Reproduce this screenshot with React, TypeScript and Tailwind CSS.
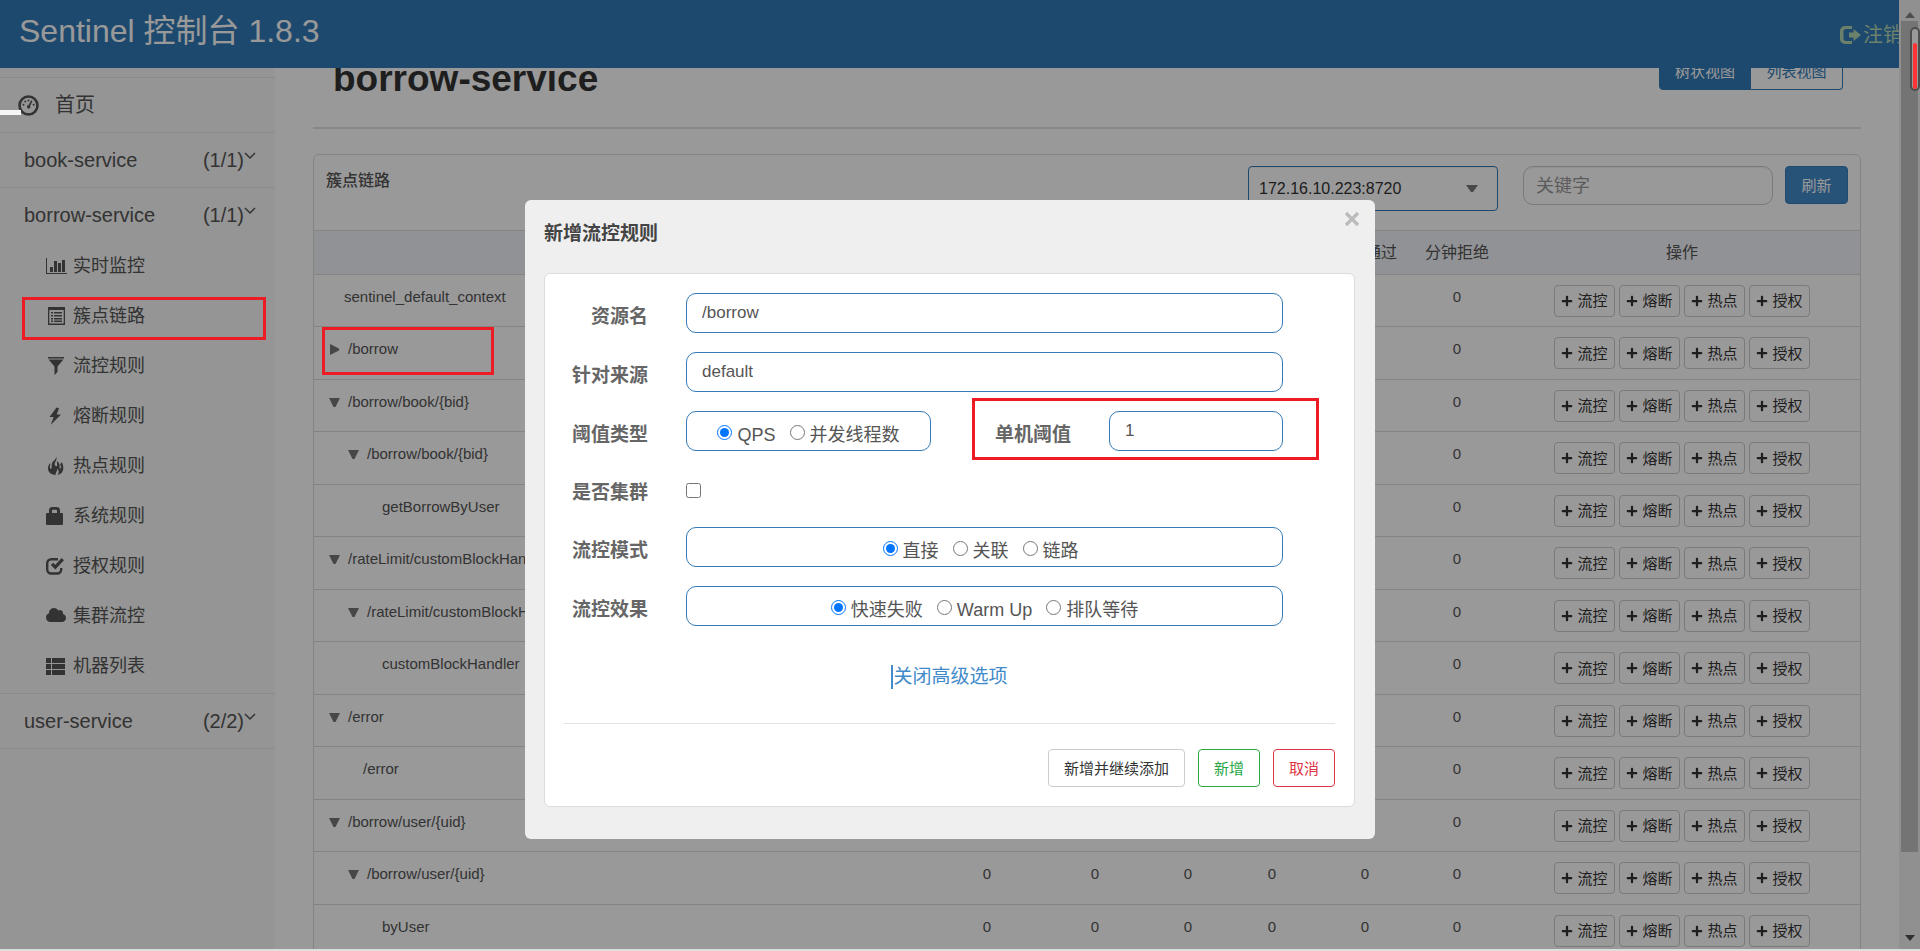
import type { ReactNode } from 'react';
import { FaCloud, FaPlus } from 'react-icons/fa';

const FONT = "font-['Liberation_Sans','Noto_Sans_CJK_SC',sans-serif]";

const MENU = [
  { label: '实时监控', icon: <ChartIcon /> },
  { label: '簇点链路', icon: <ListAltIcon />, marked: true },
  { label: '流控规则', icon: <FilterIcon /> },
  { label: '熔断规则', icon: <FlashIcon /> },
  { label: '热点规则', icon: <FireIcon /> },
  { label: '系统规则', icon: <LockIcon /> },
  { label: '授权规则', icon: <CheckIcon /> },
  { label: '集群流控', icon: <FaCloud className="mb-0.5 size-5" /> },
  { label: '机器列表', icon: <ThListIcon /> },
];

type Node = { name: string; level: number; state?: 'open' | 'closed'; marked?: boolean };

const NODES: Node[] = [
  { name: 'sentinel_default_context', level: 0 },
  { name: '/borrow', level: 0, state: 'closed', marked: true },
  { name: '/borrow/book/{bid}', level: 0, state: 'open' },
  { name: '/borrow/book/{bid}', level: 1, state: 'open' },
  { name: 'getBorrowByUser', level: 2 },
  { name: '/rateLimit/customBlockHandler', level: 0, state: 'open' },
  { name: '/rateLimit/customBlockHandler', level: 1, state: 'open' },
  { name: 'customBlockHandler', level: 2 },
  { name: '/error', level: 0, state: 'open' },
  { name: '/error', level: 1 },
  { name: '/borrow/user/{uid}', level: 0, state: 'open' },
  { name: '/borrow/user/{uid}', level: 1, state: 'open' },
  { name: 'byUser', level: 2 },
];

const COLUMNS = [
  { label: '通过QPS', width: 'w-[102px]' },
  { label: '拒绝QPS', width: 'w-[114px]' },
  { label: '并发数', width: 'w-[72px]' },
  { label: '平均RT', width: 'w-24' },
  { label: '分钟通过', width: 'w-[90px]' },
  { label: '分钟拒绝', width: 'w-[94px]' },
];

const INDENT = ['pl-[15px]', 'pl-[34px]', 'pl-[53px]'];
const ACTIONS = ['流控', '熔断', '热点', '授权'];

function DashboardIcon() {
  return (
    <svg viewBox="0 0 21 21" className="size-[21px]" fill="currentColor">
      <circle cx="10.5" cy="10.5" r="9" fill="none" stroke="currentColor" strokeWidth="2.6" />
      <circle cx="5.5" cy="9.8" r="1" />
      <circle cx="7.3" cy="6.6" r="1" />
      <circle cx="10.5" cy="5.4" r="1" />
      <circle cx="15.6" cy="9.8" r="1" />
      <path d="M13.2 5.3l1.3.6-2.4 5a1.7 1.7 0 1 1-1.5-.8z" />
    </svg>
  );
}

function ChartIcon() {
  return (
    <svg viewBox="0 0 21 16" className="h-4 w-[21px]" fill="currentColor">
      <path d="M0 0h1v15h20v1H0z" />
      <path d="M4 9h3v5H4zM8 3h3v11H8zM12 5h3v9h-3zM16 2h3v12h-3z" />
    </svg>
  );
}

function ListAltIcon() {
  return (
    <svg viewBox="0 0 17 18" className="ml-0.5 h-[18px] w-[17px]" fill="currentColor">
      <path fillRule="evenodd" d="M0 0h17v18H0zM1.3 3v13.6h14.4V3z" />
      <path d="M3 5h2v1.6H3zM6 5h8v1.6H6zM3 8h2v1.6H3zM6 8h8v1.6H6zM3 11h2v1.6H3zM6 11h8v1.6H6zM3 13.600h2v1.4H3zM6 13.600h8v1.4H6z" />
    </svg>
  );
}

function FilterIcon() {
  return (
    <svg viewBox="0 0 16 18" className="ml-0.5 h-[18px] w-4" fill="currentColor">
      <path d="M0 0h16v1.6H0zM.6 2.6h14.8L9.500 9.5V15l-3 3V9.5z" />
    </svg>
  );
}

function FlashIcon() {
  return (
    <svg viewBox="0 0 18 18" className="size-[18px]" fill="currentColor">
      <path d="M10.500 0.500L3.500 10h4.200L4.800 17.800 15 7.500h-4.300L13 1.200z" />
    </svg>
  );
}

function FireIcon() {
  return (
    <svg viewBox="0 0 18 18" className="ml-0.5 size-[18px]" fill="currentColor">
      <path d="M8.300 0C9 2.200 8.300 3.400 7.300 5 6.200 6.800 6.600 8.300 7.600 9c.9.500 1.600-.2 1.600-1.100C9.200 6.500 8.600 5.800 9.300 4c2.300 2.200 2.600 4.400 2.300 6.200-.2 1.200.4 1.700 1 1.100.7-.7.500-2.300-.5-3.800.4-.9.900-1.600 1.600-2.200 1.100 1.800 1.700 3.600 1.600 6-.1 3.500-2.300 6-5.600 6.600 1.600-2.300 1.300-4.500-.2-6.500.1 2.600-1.900 3.200-1.900 6.600C3 17.600 0 15.200 0 11.300c0-2 .8-3.700 2.200-5.200.5 1.700-.5 3-.3 4.500.1 1.200 1 1.500 1.500.8C4.200 10.200 3 8.200 4.300 5.600 5.300 3.700 7.700 3 8.300 0z" />
    </svg>
  );
}

function LockIcon() {
  return (
    <svg viewBox="0 0 17 18" className="h-[18px] w-[17px]" fill="currentColor">
      <path fillRule="evenodd" d="M3 6V3.5A3.500 3.500 0 0 1 6.500 0h4A3.500 3.500 0 0 1 14 3.500V6h2a1 1 0 0 1 1 1v10a1 1 0 0 1-1 1H1a1 1 0 0 1-1-1V7a1 1 0 0 1 1-1zM6 6h5V3.800a1 1 0 0 0-1-1H7a1 1 0 0 0-1 1z" />
    </svg>
  );
}

function CheckIcon() {
  return (
    <svg viewBox="0 0 18 18" className="size-[18px]" fill="none" stroke="currentColor">
      <path d="M12 2.200H5.200a4 4 0 0 0-4 4v6.300a4 4 0 0 0 4 4h6a4 4 0 0 0 4-4V11" strokeWidth="2.4" />
      <path d="M6 6.800l3.300 3.300L16.800 2.200" strokeWidth="3.2" />
    </svg>
  );
}

function ThListIcon() {
  return (
    <svg viewBox="0 0 19 17" className="h-[17px] w-[19px]" fill="currentColor">
      <path d="M0 0h5v5H0zM6 0h13v5H6zM0 6h5v5H0zM6 6h13v5H6zM0 12h5v5H0zM6 12h13v5H6z" />
    </svg>
  );
}

function LogoutIcon() {
  return (
    <svg viewBox="0 0 21 18" className="h-[18px] w-[21px]" fill="currentColor">
      <path d="M12 0v3H6a2.500 2.500 0 0 0-2.500 2.500v7A2.500 2.500 0 0 0 6 15h6v3H5a5 5 0 0 1-5-5V5a5 5 0 0 1 5-5z" />
      <path d="M13.500 3L21 9l-7.500 6v-3.500H9v-5h4.500z" />
    </svg>
  );
}

function Chevron() {
  return (
    <svg viewBox="0 0 12 8" className="mb-2 h-2 w-3" fill="none" stroke="currentColor" strokeWidth="1.5">
      <path d="M1 1l5 5 5-5" />
    </svg>
  );
}

function Caret({ state }: { state: 'open' | 'closed' }) {
  return (
    <svg viewBox="0 0 11 11" className="mt-1.5 mr-2 size-[11px] text-[#777]" fill="currentColor">
      <path d={state === 'open' ? 'M0 1h11L6.500 10h-2z' : 'M1 0v11l9-4.500v-2z'} />
    </svg>
  );
}

function ServiceRow({ name, count, expanded }: { name: string; count: string; expanded?: boolean }) {
  return (
    <a
      href="#"
      className={`flex items-center justify-between pr-[19px] pl-6 text-xl ${
        expanded ? 'h-[53px]' : 'h-[55px] border-b border-[#e7e7e7]'
      }`}
    >
      <span>{name}</span>
      <span className="flex items-center">
        {count}
        <Chevron />
      </span>
    </a>
  );
}

function Sidebar() {
  return (
    <nav className="w-[275px] shrink-0 bg-[#f8f8f8] pt-[9px] text-[#555]">
      <a href="#" className="flex h-14 items-center border-y border-[#e7e7e7] pl-[18px] text-xl">
        <DashboardIcon />
        <span className="ml-4">首页</span>
      </a>
      <ServiceRow name="book-service" count="(1/1)" />
      <ServiceRow name="borrow-service" count="(1/1)" expanded />
      <ul className="border-b border-[#e7e7e7] pb-0.5">
        {MENU.map((item) => (
          <li key={item.label} className="relative">
            <a href="#" className="flex h-[50px] items-center gap-1.5 pl-[46px] text-lg">
              <span className="flex w-[21px]">{item.icon}</span>
              {item.label}
            </a>
            {item.marked && (
              <span className="pointer-events-none absolute top-1.5 right-[9px] bottom-px left-[22px] z-20 border-3 border-[#ed1c24]" />
            )}
          </li>
        ))}
      </ul>
      <ServiceRow name="user-service" count="(2/2)" />
    </nav>
  );
}

function NodeTable() {
  return (
    <table className="w-full table-fixed border-collapse text-[15px] text-[#555]">
      <thead>
        <tr className="h-11 border-y border-[#ddd] bg-[#f2f4f8] text-base">
          <th className="font-normal">资源名</th>
          {COLUMNS.map((column) => (
            <th key={column.label} className={`${column.width} font-normal`}>
              {column.label}
            </th>
          ))}
          <th className="w-[356px] font-normal">操作</th>
        </tr>
      </thead>
      <tbody>
        {NODES.map((node, idx) => (
          <tr key={idx} className="h-[52px] border-b border-[#ddd] even:h-[53px]">
            <td className={`relative pt-[11px] align-top ${INDENT[node.level]}`}>
              <span className={`flex ${node.state ? '' : 'pl-[15px]'}`}>
                {node.state && <Caret state={node.state} />}
                {node.name}
              </span>
              {node.marked && (
                <span className="pointer-events-none absolute top-0 left-2 z-20 h-12 w-[172px] border-3 border-[#ed1c24]" />
              )}
            </td>
            {COLUMNS.map((column) => (
              <td key={column.label} className="pt-[11px] text-center align-top">
                0
              </td>
            ))}
            <td>
              <div className="flex justify-center gap-1">
                {ACTIONS.map((action) => (
                  <button
                    key={action}
                    type="button"
                    className="flex h-8 w-[61px] items-center justify-center gap-1 rounded border border-[#ccc] bg-white pt-0.5 text-[15px] text-[#333]"
                  >
                    <FaPlus className="mb-0.5 size-3" />
                    {action}
                  </button>
                ))}
              </div>
            </td>
          </tr>
        ))}
      </tbody>
    </table>
  );
}

function Main() {
  return (
    <main className="min-w-0 flex-1 bg-white px-[38px]">
      <div className="-mt-3.5 flex items-start justify-between pr-[18px] pl-5">
        <h1 className="text-[37px] leading-[50px] font-bold text-[#333]">borrow-service</h1>
        <div className="flex text-[15px]">
          <button type="button" className="h-9 w-[92px] rounded-l border border-[#337ab7] bg-[#337ab7] text-white">
            树状视图
          </button>
          <button
            type="button"
            className="h-9 w-[92px] rounded-r border border-l-0 border-[#337ab7] bg-white text-[#337ab7]"
          >
            列表视图
          </button>
        </div>
      </div>
      <hr className="mt-[23px] border-t-2 border-[#e3e3e3]" />
      <section className="mt-[25px] rounded-t-md border border-[#ddd]">
        <div className="flex h-[75px] items-start px-3 pt-[11px]">
          <h2 className="flex-1 text-base leading-[30px] font-medium text-[#555]">簇点链路</h2>
          <div className="relative mr-[25px]">
            <select
              aria-label="机器"
              className="h-[45px] w-[250px] appearance-none rounded border border-[#337ab7] bg-white px-2.5 text-base text-[#333] inset-shadow-xs"
            >
              <option>172.16.10.223:8720</option>
            </select>
            <svg viewBox="0 0 12 8" className="absolute top-[19px] right-5 h-2 w-3 text-[#777]" fill="currentColor">
              <path d="M0 0h12L7 7H5z" />
            </svg>
          </div>
          <input
            aria-label="关键字"
            placeholder="关键字"
            className="mr-3 h-[39px] w-[250px] rounded-[10px] border border-[#ccc] bg-white px-3 pt-0.5 text-lg inset-shadow-xs placeholder:text-[#999]"
          />
          <button type="button" className="h-[38px] w-[63px] rounded border border-[#357ebd] bg-[#428bca] pt-0.5 text-[15px] text-white">
            刷新
          </button>
        </div>
        <NodeTable />
      </section>
    </main>
  );
}

function Field({ label, htmlFor, children }: { label: string; htmlFor?: string; children: ReactNode }) {
  return (
    <div className="flex items-center">
      <label htmlFor={htmlFor} className="mr-[38px] w-[84px] pt-2 text-right text-[19px] leading-6 font-bold text-[#666]">
        {label}
      </label>
      {children}
    </div>
  );
}

function RadioGroup({ name, options, className }: { name: string; options: string[]; className: string }) {
  return (
    <div className={`flex h-10 items-center justify-center gap-3.5 rounded-[10px] border border-[#337ab7] ${className}`}>
      {options.map((option, idx) => (
        <label key={option} className="flex items-center gap-[5px] pt-2 text-lg leading-6 text-[#555]">
          <input type="radio" name={name} defaultChecked={idx === 0} className="mb-1.5 size-[15px] accent-[#0075ff]" />
          {option}
        </label>
      ))}
    </div>
  );
}

const INPUT = 'h-10 rounded-[10px] border border-[#337ab7] bg-white px-[15px] text-[17px] text-[#555]';

function FlowRuleDialog() {
  return (
    <div
      role="dialog"
      aria-label="新增流控规则"
      className="relative z-20 w-[850px] rounded-md bg-[#efefef] pt-4 pr-5 pb-8 pl-[19px]"
    >
      <button type="button" aria-label="关闭" className="absolute top-[11px] right-[15px] text-[#bbb]">
        <svg viewBox="0 0 16 16" className="size-4" stroke="currentColor" strokeWidth="3.2">
          <path d="M2 2l12 12M14 2L2 14" />
        </svg>
      </button>
      <h2 className="mb-[21px] text-[19px] leading-9 font-bold text-[#444]">新增流控规则</h2>
      <form className="rounded-md border border-[#dcdcdc] bg-white p-[19px]">
        <div className="flex flex-col gap-[19px]">
          <Field label="资源名" htmlFor="resource">
            <input id="resource" defaultValue="/borrow" className={`${INPUT} w-[597px]`} />
          </Field>
          <Field label="针对来源" htmlFor="origin">
            <input id="origin" defaultValue="default" className={`${INPUT} w-[597px]`} />
          </Field>
          <div className="flex gap-14">
            <Field label="阈值类型">
              <RadioGroup name="grade" options={['QPS', '并发线程数']} className="w-[245px]" />
            </Field>
            <div className="relative">
              <Field label="单机阈值" htmlFor="count">
                <input id="count" defaultValue="1" className={`${INPUT} w-[174px]`} />
              </Field>
              <span className="pointer-events-none absolute -top-[13px] -left-[15px] h-[62px] w-[347px] border-3 border-[#ed1c24]" />
            </div>
          </div>
          <div className="flex h-[38px]">
            <Field label="是否集群" htmlFor="cluster">
              <input id="cluster" type="checkbox" className="mt-0.5 size-[15px]" />
            </Field>
          </div>
          <Field label="流控模式">
            <RadioGroup name="strategy" options={['直接', '关联', '链路']} className="w-[597px] pr-2" />
          </Field>
          <Field label="流控效果">
            <RadioGroup name="effect" options={['快速失败', 'Warm Up', '排队等待']} className="w-[597px]" />
          </Field>
        </div>
        <div className="mt-[39px] flex justify-center">
          <a href="#" className="border-l-2 border-[#428bca] text-[19px] leading-6 text-[#428bca]">
            关闭高级选项
          </a>
        </div>
        <hr className="mt-[34px] border-[#e3e3e3]" />
        <div className="mt-[25px] flex justify-end gap-[13px] text-[15px]">
          <button type="button" className="h-[38px] w-[137px] rounded border border-[#ccc] pt-0.5 text-[#333]">
            新增并继续添加
          </button>
          <button type="button" className="h-[38px] w-[62px] rounded border border-[#28a745] pt-0.5 text-[#28a745]">
            新增
          </button>
          <button type="button" className="h-[38px] w-[62px] rounded border border-[#dc3545] pt-0.5 text-[#dc3545]">
            取消
          </button>
        </div>
      </form>
    </div>
  );
}

function Scrollbar() {
  return (
    <div className="flex w-[21px] shrink-0 flex-col items-center bg-[#f1f1f1]">
      <svg viewBox="0 0 10 6" className="mt-3 mb-[3px] h-1.5 w-2.5 text-[#808080]" fill="currentColor">
        <path d="M5 0l5 6H0z" />
      </svg>
      <div className="w-[17px] flex-1 bg-[#c1c1c1]" />
      <svg viewBox="0 0 10 6" className="mt-[83px] mb-2 h-1.5 w-2.5 text-[#505050]" fill="currentColor">
        <path d="M0 0h10L5 6z" />
      </svg>
    </div>
  );
}

export default function App() {
  return (
    <div className={`relative flex h-screen flex-col overflow-hidden bg-[#dedede] pb-0.5 ${FONT}`}>
      <div className="flex min-h-0 flex-1">
        <div className="flex min-w-0 flex-1 flex-col">
          <header className="flex h-[68px] shrink-0 items-center justify-between overflow-hidden bg-[#337ab7] pl-[19px]">
            <a href="#" className="pb-1.5 text-[32px] text-white">
              Sentinel 控制台 1.8.3
            </a>
            <a href="#" className="flex w-[59px] items-center gap-0.5 pt-0.5 text-xl whitespace-nowrap text-[#b5d8b5]">
              <span>
                <LogoutIcon />
              </span>
              注销
            </a>
          </header>
          <div className="flex min-h-0 flex-1 overflow-hidden">
            <Sidebar />
            <Main />
          </div>
        </div>
        <Scrollbar />
      </div>

      <div className="absolute inset-x-0 top-0 bottom-0.5 z-10 bg-black/40" />
      <div className="absolute inset-x-0 top-[200px] z-20 flex justify-center pr-5">
        <FlowRuleDialog />
      </div>

      <span className="absolute top-[110px] left-0 z-20 h-[5px] w-[21px] bg-[#f5f6f8] shadow-lg" />
      <span className="absolute top-[27px] right-0 z-20 flex h-16 w-2.5 flex-col rounded-full border-2 border-[#4d4d4d] bg-[#999] px-px pt-3.5">
        <span className="flex-1 rounded-full bg-[#f33]" />
      </span>
    </div>
  );
}
